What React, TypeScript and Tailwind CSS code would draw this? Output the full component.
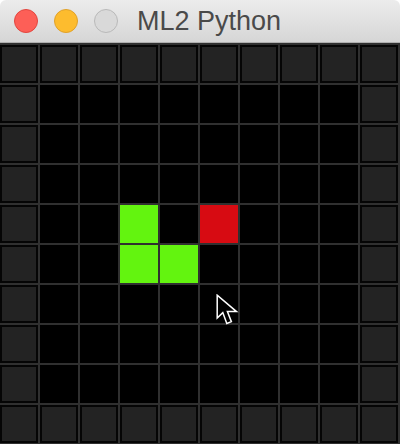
import React from "react";

const N = 10;
const greens = new Set(["4-3", "5-3", "5-4"]);
const reds = new Set(["4-5"]);

function Cell({ r, c }: { r: number; c: number }) {
  const wall = r === 0 || c === 0 || r === N - 1 || c === N - 1;
  const key = `${r}-${c}`;
  let inner: React.ReactNode;
  if (wall) {
    inner = (
      <div className="w-[38px] h-[38px] bg-[#050505] p-[2px]">
        <div className="w-full h-full bg-[#232323]" />
      </div>
    );
  } else if (greens.has(key)) {
    inner = <div className="w-[38px] h-[38px] bg-[#63f40f]" />;
  } else if (reds.has(key)) {
    inner = <div className="w-[38px] h-[38px] bg-[#d70b12]" />;
  } else {
    inner = <div className="w-[38px] h-[38px] bg-black" />;
  }
  return <div className="w-[40px] h-[40px] pr-[2px] pb-[2px] bg-[#303030]">{inner}</div>;
}

export default function App() {
  const cells = [];
  for (let r = 0; r < N; r++) for (let c = 0; c < N; c++) cells.push(<Cell key={`${r}-${c}`} r={r} c={c} />);
  return (
    <div className="w-[400px] h-[444px] bg-white overflow-hidden relative" style={{ fontFamily: '"Liberation Sans", Arial, sans-serif' }}>
      <div className="w-[400px] h-[444px] rounded-t-[6px] overflow-hidden flex flex-col">
        <div className="h-[43px] shrink-0 bg-gradient-to-b from-[#ececec] to-[#d6d6d6] border-b border-[#b0b0b0] flex items-center pl-[14px]">
          <div className="w-[24px] h-[24px] rounded-full bg-[#fd5f57] border border-[#e2463f]" />
          <div className="w-[24px] h-[24px] rounded-full bg-[#fdbc2e] border border-[#e0a12a] ml-[16px]" />
          <div className="w-[24px] h-[24px] rounded-full bg-[#d9d9d9] border border-[#b9b9b9] ml-[16px]" />
          <div className="ml-[19px] text-[27px] leading-none text-[#4a4a4a] mt-[1px]">ML2 Python</div>
        </div>
        <div className="h-[2px] bg-[#303030] shrink-0" />
        <div className="grid grid-cols-[repeat(10,40px)] grid-rows-[repeat(10,40px)] bg-[#303030]">{cells}</div>
      </div>
      <svg className="absolute left-[216px] top-[294px]" width="24" height="34" viewBox="0 0 24 34">
        <path
          d="M1.2 1.2 L1.2 24 L6.8 18.6 L10.8 29.5 L15.4 27.6 L11.4 17.6 L20.5 17.6 Z"
          fill="black"
          stroke="white"
          strokeWidth="1.5"
          strokeLinejoin="miter"
        />
      </svg>
    </div>
  );
}
